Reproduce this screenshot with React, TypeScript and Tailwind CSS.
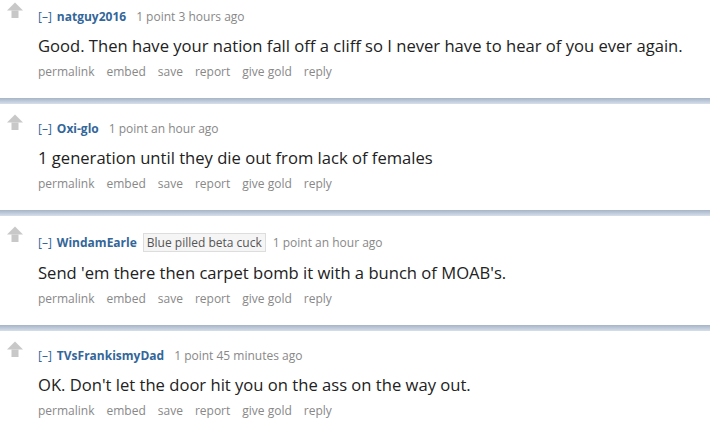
import React from 'react';

type Comment = {
  author: string;
  flair?: string;
  time: string;
  body: string;
};

const comments: Comment[] = [
  {
    author: 'natguy2016',
    time: '3 hours ago',
    body: 'Good. Then have your nation fall off a cliff so I never have to hear of you ever again.',
  },
  { author: 'Oxi-glo', time: 'an hour ago', body: '1 generation until they die out from lack of females' },
  {
    author: 'WindamEarle',
    flair: 'Blue pilled beta cuck',
    time: 'an hour ago',
    body: "Send 'em there then carpet bomb it with a bunch of MOAB's.",
  },
  {
    author: 'TVsFrankismyDad',
    time: '45 minutes ago',
    body: "OK. Don't let the door hit you on the ass on the way out.",
  },
];

const actions = ['permalink', 'embed', 'save', 'report', 'give gold', 'reply'];

function UpArrow() {
  return (
    <svg width="16" height="16" viewBox="0 0 16 16" className="block">
      <polygon points="0,8.5 8,0.5 16,8.5" fill="#c8c8c8" />
      <rect x="4.5" y="8.5" width="7" height="7.5" fill="#c8c8c8" />
    </svg>
  );
}

function CommentRow({ c, first }: { c: Comment; first: boolean }) {
  return (
    <div className={`flex ${first ? 'pt-[9px]' : 'pt-[17px]'} pb-[18px]`}>
      <div className="w-[38px] shrink-0 pl-[7px]">
        <div className="-mt-[7px]">
          <UpArrow />
        </div>
      </div>
      <div className="flex flex-col">
        <div className="flex min-h-[16px] items-center text-[12px] leading-[16px]">
          <span className="text-[#336699]">[–]</span>
          <span className="ml-[5px] font-bold text-[#336699]">{c.author}</span>
          {c.flair && (
            <span className="ml-[6px] border border-[#dddddd] bg-[#f5f5f5] px-[3px] text-[12px] leading-[17px] text-[#545454]">
              {c.flair}
            </span>
          )}
          <span className={`${c.flair ? 'ml-[7px]' : 'ml-[10px]'} text-[#888888]`}>1 point {c.time}</span>
        </div>
        <div className="mt-[9px] text-[16.6px] leading-[24px] text-[#222222]">{c.body}</div>
        <div className="mt-[6px] flex gap-[12px] text-[12px] leading-[16px] text-[#888888]">
          {actions.map((a) => (
            <span key={a}>{a}</span>
          ))}
        </div>
      </div>
    </div>
  );
}

export default function App() {
  return (
    <div className="h-[432px] w-[710px] overflow-hidden bg-white font-['Open_Sans',sans-serif]">
      {comments.map((c, i) => (
        <div key={c.author}>
          {i > 0 && <div className="h-[6px] bg-gradient-to-b from-[#a6b4c7] to-[#d6dfea]" />}
          <CommentRow c={c} first={i === 0} />
        </div>
      ))}
    </div>
  );
}
